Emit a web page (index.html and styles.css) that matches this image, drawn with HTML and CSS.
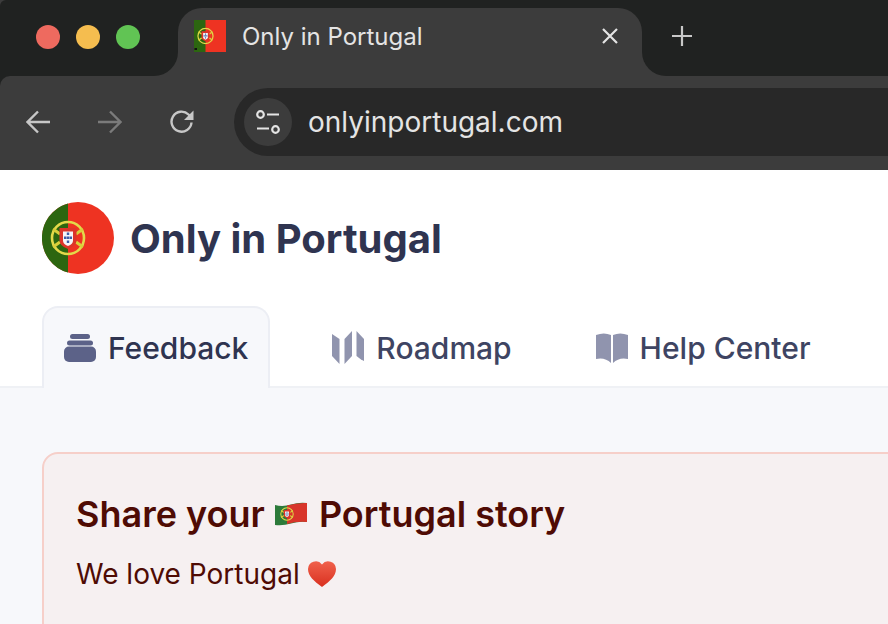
FILE: index.html
```html
<!DOCTYPE html>
<html lang="en">

<head>
	<meta charset="UTF-8">
	<title>Only in Portugal</title>
	<link rel="stylesheet" href="styles.css">
</head>

<body>
	<svg class="defs" width="0" height="0">
		<linearGradient id="heart-fill" x1="0" y1="0" x2="0" y2="1">
			<stop offset="0" stop-color="#f0614c"/>
			<stop offset="1" stop-color="#d9301f"/>
		</linearGradient>
		<symbol id="arms" viewBox="0 0 36 36">
			<circle cx="18" cy="18" r="16" fill="none" stroke="#e3d94a" stroke-width="2.600"/>
			<path d="M3 9l7 5M33 9l-7 5M3 27l7-5M33 27l-7-5" fill="none" stroke="#d9cf3a" stroke-width="3"/>
			<path d="M9.500 8h17v12q0 6-8.500 9q-8.500-3-8.500-9z" fill="#dc352a"/>
			<path d="M13 11.500h10v9q0 3.500-5 5.500q-5-2-5-5.500z" fill="#f6f6f8"/>
			<path d="M16.800 12.500h2.400v2.600h-2.400zM14 16.500h2.400v2.600H14zM16.800 16.500h2.400v2.600h-2.400zM19.600 16.500h2.400v2.600h-2.400zM16.800 20.500h2.400v2.600h-2.400z" fill="#3f5fa8"/>
		</symbol>
	</svg>

	<div class="browser">
		<div class="tabstrip">
			<div class="lights">
				<span class="light red"></span>
				<span class="light yellow"></span>
				<span class="light green"></span>
			</div>
			<div class="tab-slot">
				<div class="tab">
					<svg class="favicon" viewBox="0 0 32 32">
						<rect width="32" height="32" fill="#ee3322"/>
						<rect width="11.500" height="32" fill="#2c6610"/>
						<use href="#arms" x="3" y="7.500" width="17" height="17"/>
						<rect x="0.500" y="28" width="2.500" height="2" fill="#111"/>
					</svg>
					<span class="tab-title">Only in Portugal</span>
					<svg class="tab-close" viewBox="0 0 16 16">
						<path d="M1 1l14 14M15 1L1 15" fill="none" stroke="#e4e4e4" stroke-width="2.200"/>
					</svg>
				</div>
			</div>
			<div class="strip-rest">
				<svg class="new-tab" viewBox="0 0 20 20">
					<path d="M10 0v20M0 10h20" fill="none" stroke="#c8c8c8" stroke-width="2.200"/>
				</svg>
			</div>
		</div>
		<div class="toolbar">
			<svg class="nav-icon" viewBox="0 0 24 24">
				<path d="M24 12H2M12 1.500L1.500 12 12 22.500" fill="none" stroke="#c7c7c7" stroke-width="2.400"/>
			</svg>
			<svg class="nav-icon" viewBox="0 0 24 24">
				<path d="M0 12h22M12 1.500L22.500 12 12 22.500" fill="none" stroke="#7b7b7b" stroke-width="2.400"/>
			</svg>
			<svg class="nav-icon" viewBox="0 0 24 24">
				<path d="M21.500 12.500A10 10 0 1 1 18.500 4.500L22 8" fill="none" stroke="#c7c7c7" stroke-width="2.400"/>
				<path d="M23.500 0.500v9.500h-9.500z" fill="#c7c7c7"/>
			</svg>
			<div class="omnibox">
				<span class="site-info">
					<svg class="tune" viewBox="0 0 24 24">
						<circle cx="4.500" cy="4.500" r="3.300" fill="none" stroke="#e4e4e4" stroke-width="2.200"/>
						<circle cx="19.500" cy="19.500" r="3.300" fill="none" stroke="#e4e4e4" stroke-width="2.200"/>
						<path d="M11 4.500h12M1 18.500h12" fill="none" stroke="#e4e4e4" stroke-width="2.200"/>
					</svg>
				</span>
				<span class="url">onlyinportugal.com</span>
			</div>
		</div>
	</div>

	<div class="site-header">
		<div class="brand">
			<svg class="logo" viewBox="0 0 72 72">
				<circle cx="36" cy="36" r="36" fill="#ee3322"/>
				<path d="M26 1.400A36 36 0 0 0 26 70.600z" fill="#2c6610"/>
				<use href="#arms" x="8" y="18" width="36" height="36"/>
			</svg>
			<span class="brand-name">Only in Portugal</span>
		</div>
		<nav class="tabs">
			<a class="nav-tab active">
				<svg class="tab-icon" viewBox="0 0 32 28">
					<rect x="6" y="0" width="20" height="5" rx="2.500"/>
					<rect x="3" y="6.500" width="26" height="5" rx="2.500"/>
					<rect x="0" y="12.500" width="32" height="15.500" rx="5"/>
				</svg>
				Feedback
			</a>
			<a class="nav-tab">
				<svg class="tab-icon" viewBox="0 0 32 34">
					<path d="M0 3L7.500 8V33L0 25z"/>
					<path d="M12.500 8L20 0V25L12.500 33z"/>
					<path d="M24.500 0L32 8V30L29 28.500L24.500 25z"/>
				</svg>
				Roadmap
			</a>
			<a class="nav-tab">
				<svg class="tab-icon" viewBox="0 0 32 30">
					<path d="M0 2Q8-1 15 2V30Q9 24 0 26z"/>
					<path d="M32 2Q24-1 17 2V30Q23 24 32 26z"/>
				</svg>
				Help Center
			</a>
		</nav>
	</div>

	<div class="main">
		<div class="notice">
			<h2 class="notice-title">Share your
				<svg class="emoji-flag" viewBox="0 0 32 24">
					<path d="M0 3Q8 5 16 2.500T32 1V20Q24 19 16 21.500T0 23z" fill="#2c7a3a"/>
					<path d="M12 3.500Q22 .5 32 1V20Q22 19 12 22z" fill="#d8352a"/>
					<use href="#arms" x="5" y="5" width="14" height="14"/>
				</svg>
				Portugal story
			</h2>
			<p class="notice-text">We love Portugal
				<svg class="emoji-heart" viewBox="0 0 28 26">
					<path d="M14 26C6 20 0 15 0 8A7.800 7.800 0 0 1 14 3.500A7.800 7.800 0 0 1 28 8C28 15 22 20 14 26z" fill="url(#heart-fill)"/>
				</svg>
			</p>
		</div>
	</div>
</body>

</html>
```

FILE: styles.css
```css
* {
	box-sizing: border-box;
}

html,
body {
	margin: 0;
	height: 100%;
	overflow: hidden;
}

body {
	display: flex;
	flex-direction: column;
	background-color: #f7f8fb;
	font-family: Inter, "Liberation Sans", sans-serif;
}

.defs {
	position: absolute;
}

/* browser chrome */
.browser {
	background-color: #202221;
}

.tabstrip {
	display: flex;
	height: 76px;
	background-color: #3c3c3c;
}

.lights {
	display: flex;
	gap: 16px;
	width: 178px;
	padding: 25px 0 0 36px;
	background-color: #202221;
	border-radius: 6px 0 24px 0;
}

.light {
	width: 24px;
	height: 24px;
	border-radius: 50%;
}

.red {
	background-color: #ee6a5f;
}

.yellow {
	background-color: #f5bd4f;
}

.green {
	background-color: #61c454;
}

.tab-slot {
	width: 464px;
	padding-top: 8px;
	background-color: #202221;
}

.tab {
	display: flex;
	align-items: center;
	height: 68px;
	padding: 0 24px 12px 16px;
	background-color: #3c3c3c;
	border-radius: 24px 24px 0 0;
}

.favicon {
	width: 32px;
	height: 32px;
}

.tab-title {
	flex: 1;
	margin-left: 16px;
	color: #e4e4e4;
	font-size: 24px;
}

.tab-close {
	width: 16px;
	height: 16px;
}

.strip-rest {
	flex: 1;
	padding: 26px 0 0 30px;
	background-color: #202221;
	border-radius: 0 0 0 24px;
}

.new-tab {
	display: block;
	width: 20px;
	height: 20px;
}

.toolbar {
	display: flex;
	align-items: center;
	gap: 48px;
	height: 94px;
	padding: 0 0 2px 26px;
	background-color: #3c3c3c;
	border-radius: 10px 0 0 0;
}

.nav-icon {
	flex: none;
	width: 24px;
	height: 24px;
}

.omnibox {
	display: flex;
	flex: 1;
	align-items: center;
	gap: 16px;
	height: 68px;
	margin: 0 -40px 0 -8px;
	padding-left: 10px;
	background-color: #282828;
	border-radius: 34px;
}

.site-info {
	display: flex;
	justify-content: center;
	align-items: center;
	width: 48px;
	height: 48px;
	background-color: #3c3c3c;
	border-radius: 50%;
}

.tune {
	width: 24px;
	height: 24px;
}

.url {
	color: #e4e4e4;
	font-size: 28px;
}

/* site header */
.site-header {
	padding: 32px 42px 0;
	background-color: #fff;
	border-bottom: 2px solid #eff1f5;
}

.brand {
	display: flex;
	align-items: center;
	gap: 16px;
}

.logo {
	width: 72px;
	height: 72px;
}

.brand-name {
	color: #2f3450;
	font-size: 40px;
	font-weight: 700;
}

.tabs {
	display: flex;
	gap: 40px;
	margin: 32px 0 -2px;
}

.nav-tab {
	display: flex;
	align-items: center;
	gap: 12px;
	height: 82px;
	padding: 2px 22px 0;
	color: #3e4462;
	font-size: 30px;
	font-weight: 500;
}

.nav-tab.active {
	padding: 0 20px;
	color: #2f3450;
	background-color: #f7f8fb;
	border: 2px solid #eceef4;
	border-bottom: 0;
	border-radius: 16px 16px 0 0;
}

.tab-icon {
	width: 32px;
	fill: #9094ae;
}

.active .tab-icon {
	fill: #5c6288;
}

/* content */
.main {
	flex: 1;
	min-height: 0;
	padding: 64px 42px 0;
	overflow: hidden;
}

.notice {
	height: 220px;
	margin-right: -80px;
	padding: 36px 32px 0;
	background-color: #f6f0f1;
	border: 2px solid #f6cfc9;
	border-radius: 16px;
}

.notice-title {
	margin: 0;
	color: #4f0b04;
	font-size: 36px;
	font-weight: 600;
	line-height: 48px;
}

.notice-title .emoji-flag {
	margin: 0 3px 0 1px;
}

.notice-text {
	margin: 16px 0 0;
	color: #4f0b04;
	font-size: 28px;
	line-height: 40px;
}

.emoji-flag {
	width: 32px;
	height: 24px;
	vertical-align: 1px;
}

.emoji-heart {
	width: 28px;
	height: 26px;
	vertical-align: -3px;
}
```
